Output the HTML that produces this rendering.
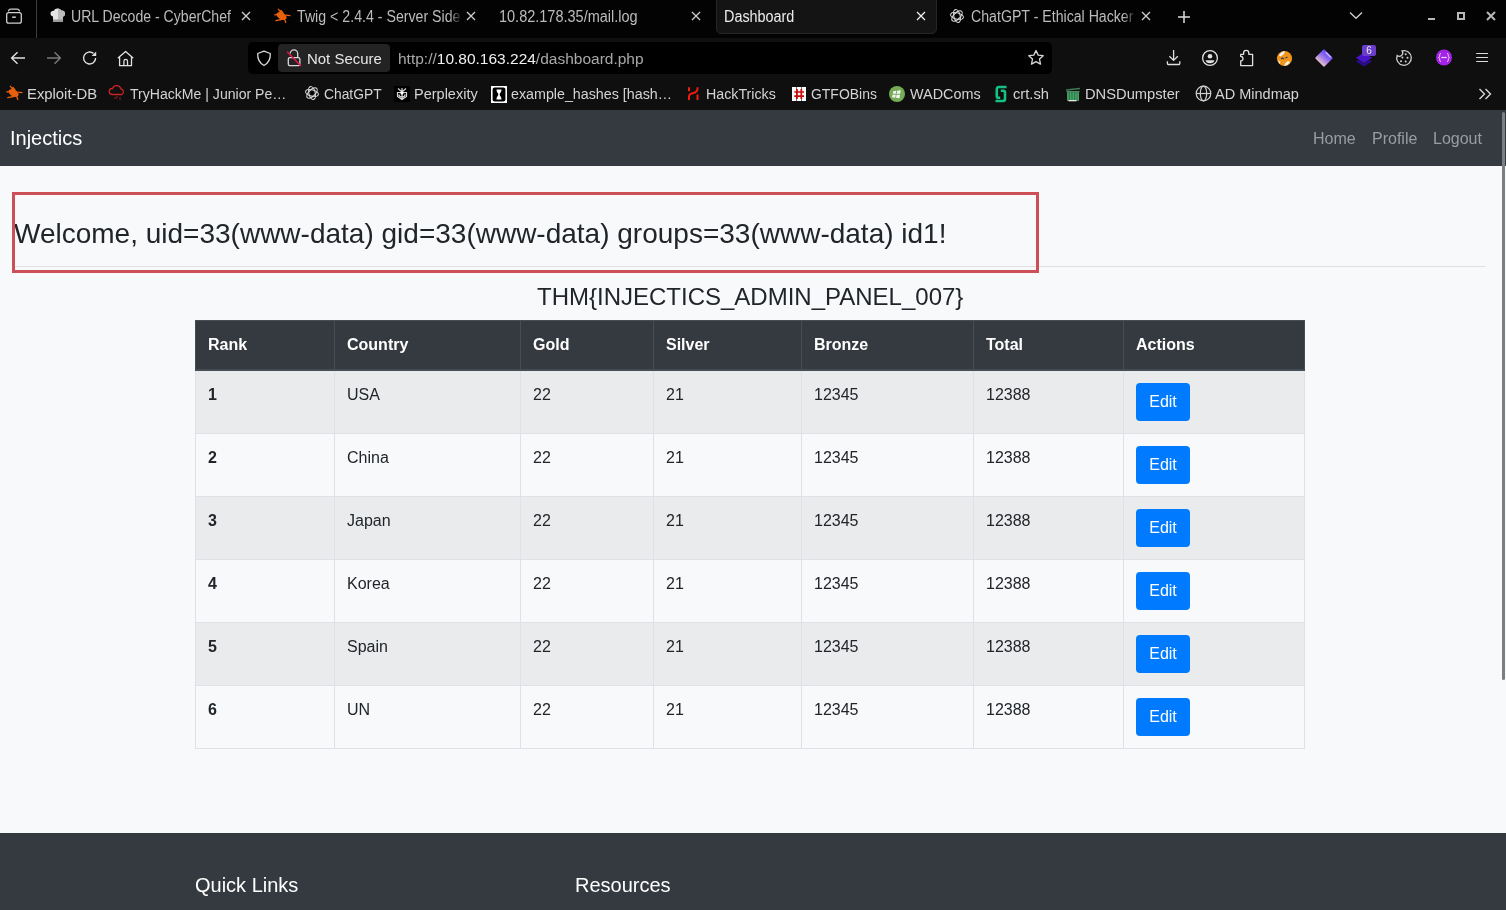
<!DOCTYPE html>
<html><head><meta charset="utf-8">
<style>
*{box-sizing:border-box;margin:0;padding:0}
html,body{width:1506px;height:910px;overflow:hidden;background:#f8f9fa;font-family:"Liberation Sans",sans-serif;position:relative}
body{will-change:transform}
.a{position:absolute}
#tabbar{position:absolute;left:0;top:0;width:1506px;height:38px;background:#030303}
#toolbar{position:absolute;left:0;top:38px;width:1506px;height:72px;background:#0f0f0f}
.ct{position:absolute;white-space:nowrap;font-size:15px;line-height:18px;color:#bdbdbd;transform-origin:0 14.2px}
.ic{position:absolute}
svg{display:block}
/* page */
#nav{position:absolute;left:0;top:110px;width:1506px;height:56px;background:#343a40}
.pt{position:absolute;white-space:nowrap}
table{position:absolute;left:195px;top:320px;width:1109px;border-collapse:collapse;font-size:16px;line-height:24px;color:#212529;table-layout:fixed}
th,td{border:1px solid #dee2e6;padding:12px;vertical-align:top;text-align:left}
thead th{background:#343a40;color:#fff;border-color:#454d55;border-bottom-width:2px}
tbody tr:nth-child(odd) td{background:#eaebed}
tbody tr:nth-child(even) td{background:#f8f9fa}
.btn{display:inline-block;width:54px;height:38px;background:#007bff;color:#fff;border-radius:4px;text-align:center;line-height:24px;padding:7px 0 5px;font-size:16px}
#footer{position:absolute;left:0;top:833px;width:1506px;height:77px;background:#343a40}
</style></head><body>

<div id="tabbar"></div>
<div id="toolbar"></div>
<!-- tab list icon -->
<svg class="ic" style="left:5px;top:7px" width="18" height="18" viewBox="0 0 18 18" fill="none" stroke="#d0d0d0" stroke-width="1.3"><path d="M3.6 3.8Q4 2.1 5.8 2.1H12.2Q14 2.1 14.4 3.8" stroke-linecap="round"/><rect x="1.7" y="5.6" width="14.6" height="10.6" rx="2"/><path d="M7.2 10.2h3.6" stroke-width="1.5"/></svg>
<div class="a" style="left:36px;top:0;width:1px;height:38px;background:#3d3d3d"></div>
<!-- chef hat -->
<svg class="ic" style="left:50px;top:8px" width="16" height="15" viewBox="0 0 16 15"><path d="M3 14V8.5C1 8 0.3 6.5 0.6 5 1 3.2 2.6 2.4 4 2.7 4.6 1 6.2 0.3 7.8 0.5 9.4 0.6 10.6 1.4 11.2 2.6 13 2.2 14.8 3.3 15 5.2 15.3 7 14.2 8.2 13 8.6V14Z" fill="#e6e6e6"/><path d="M8 0.5C9.5 0.6 10.6 1.4 11.2 2.6 13 2.2 14.8 3.3 15 5.2 15.3 7 14.2 8.2 13 8.6V14H8Z" fill="#bdbdbd"/><rect x="3" y="11.5" width="10" height="2.5" fill="#9a9a9a"/></svg>
<!-- bug orange (tab2) -->
<svg class="ic" style="left:273px;top:8px" width="18" height="16" viewBox="0 0 18 16"><g stroke="#e8600c" stroke-width="1.3" fill="none" stroke-linecap="round"><path d="M8 4.5L5.3 1.2M10 5L8 2.5M13 7.2L17 7.6M8.5 11.5L2.8 12.6M11.5 11L12.8 14.5M4.5 6.5L1.8 6.8"/></g><ellipse cx="8.6" cy="8" rx="5.4" ry="3.4" transform="rotate(28 8.6 8)" fill="#e8600c"/></svg>
<svg class="ic" style="left:449px;top:0;z-index:3" width="14" height="38"><defs><linearGradient id="fd" x1="0" x2="1"><stop offset="0" stop-color="#030303" stop-opacity="0"/><stop offset="1" stop-color="#030303"/></linearGradient></defs><rect width="14" height="38" fill="url(#fd)"/></svg>
<!-- active tab -->
<div class="a" style="left:716px;top:-6px;width:221px;height:40px;background:#141414;border:1px solid #262626;border-radius:5px"></div>
<!-- chatgpt icon -->
<svg class="ic" style="left:949px;top:8px" width="16" height="16" viewBox="0 0 16 16" fill="none" stroke="#d8d8d8" stroke-width="1.1"><g transform="translate(8 8)"><ellipse rx="6.6" ry="3.2" transform="rotate(15)"/><ellipse rx="6.6" ry="3.2" transform="rotate(75)"/><ellipse rx="6.6" ry="3.2" transform="rotate(135)"/><circle r="1.2" fill="#000" stroke="none"/></g></svg>
<svg class="ic" style="left:1123px;top:0;z-index:3" width="14" height="38"><rect width="14" height="38" fill="url(#fd)"/></svg>
<svg class="ic" style="left:1177px;top:10px" width="14" height="14" fill="none" stroke="#e0e0e0" stroke-width="1.5"><path d="M7 1v12M1 7h12"/></svg>
<svg class="ic" style="left:1349px;top:11px" width="14" height="9" fill="none" stroke="#d0d0d0" stroke-width="1.3"><path d="M1 1.5l6 5.8 6-5.8"/></svg>
<div class="a" style="left:1428px;top:18px;width:7px;height:2px;background:#b8b8b8"></div>
<div class="a" style="left:1457px;top:12px;width:8px;height:8px;border:2px solid #b8b8b8;border-top-width:2px"></div>
<svg class="ic" style="left:1486px;top:11px" width="10" height="10" fill="none" stroke="#b8b8b8" stroke-width="2"><path d="M1 1l8 8M9 1l-8 8"/></svg>

<svg class="ic" style="left:241px;top:11px" width="10" height="10" fill="none" stroke="#cfcfcf" stroke-width="1.3"><path d="M1 1L9 9M9 1L1 9"/></svg>
<svg class="ic" style="left:466px;top:11px" width="10" height="10" fill="none" stroke="#cfcfcf" stroke-width="1.3"><path d="M1 1L9 9M9 1L1 9"/></svg>
<svg class="ic" style="left:691.3px;top:11px" width="10" height="10" fill="none" stroke="#cfcfcf" stroke-width="1.3"><path d="M1 1L9 9M9 1L1 9"/></svg>
<svg class="ic" style="left:916px;top:11px" width="10" height="10" fill="none" stroke="#f0f0f0" stroke-width="1.3"><path d="M1 1L9 9M9 1L1 9"/></svg>
<svg class="ic" style="left:1141px;top:11px" width="10" height="10" fill="none" stroke="#cfcfcf" stroke-width="1.3"><path d="M1 1L9 9M9 1L1 9"/></svg>
<!-- toolbar -->
<svg class="ic" style="left:10px;top:50px" width="16" height="16" fill="none" stroke="#e0e0e0" stroke-width="1.4"><path d="M15 8H1.8M7.5 2.2L1.6 8l5.9 5.8"/></svg>
<svg class="ic" style="left:46px;top:50px" width="16" height="16" fill="none" stroke="#7a7a7a" stroke-width="1.4"><path d="M1 8h13.2M8.5 2.2L14.4 8l-5.9 5.8"/></svg>
<svg class="ic" style="left:82px;top:50px" width="16" height="16" fill="none" stroke="#e0e0e0" stroke-width="1.4"><path d="M13.6 8A6 6 0 1 1 11.5 3.4"/><path d="M14.2 1.6v4.5H9.7Z" fill="#e0e0e0" stroke="none"/></svg>
<svg class="ic" style="left:117px;top:50px" width="17" height="17" fill="none" stroke="#e0e0e0" stroke-width="1.3" stroke-linejoin="round" stroke-linecap="round"><path d="M1.3 7.8L8.6 1.4l7.2 6.4M2.6 6.8v8.9h11.9V6.8M6.9 15.7v-4.5a1.8 1.8 0 0 1 3.6 0v4.5"/></svg>
<div class="a" style="left:248px;top:42px;width:804px;height:32px;background:#000;border-radius:5px"></div>
<svg class="ic" style="left:256px;top:50px" width="16" height="17" fill="none" stroke="#d8d8d8" stroke-width="1.3"><path d="M8 1.2L14.3 3.5c.3 6-2.3 9.8-6.3 12-4-2.2-6.6-6-6.3-12Z" stroke-linejoin="round"/></svg>
<div class="a" style="left:278px;top:44px;width:112px;height:28px;background:#232323;border-radius:4px"></div>
<svg class="ic" style="left:286px;top:49px" width="17" height="18" fill="none" stroke="#d8d8d8" stroke-width="1.3"><rect x="2.3" y="8.6" width="11.6" height="8.1" rx="1.6"/><path d="M4.3 4.6a3.7 3.7 0 0 1 7.4 0V8.6"/><path d="M1.2 2.8l13.8 14.2" stroke="#e8174a" stroke-width="1.5"/></svg>
<div class="ct" style="left:397.5px;top:50.3px;transform:scale(1.033,1.03)"><span style="color:#a8a8a8">http://</span><span style="color:#f0f0f0">10.80.163.224</span><span style="color:#a8a8a8">/dashboard.php</span></div>
<svg class="ic" style="left:1027px;top:49px" width="18" height="18" fill="none" stroke="#d8d8d8" stroke-width="1.3"><path d="M9 1.5l2.2 4.6 5 .6-3.7 3.4 1 5-4.5-2.5-4.5 2.5 1-5L1.8 6.7l5-.6Z" stroke-linejoin="round"/></svg>
<svg class="ic" style="left:1166px;top:49px" width="16" height="17" fill="none" stroke="#e0e0e0" stroke-width="1.3" stroke-linejoin="round"><path d="M7.6 1v10.4M3.4 7.3l4.2 4.1 4.2-4.1M1.4 12.2v2.3q0 1 1 1h10.4q1 0 1-1v-2.3"/></svg>
<svg class="ic" style="left:1201px;top:49px" width="18" height="18" fill="none" stroke="#e0e0e0" stroke-width="1.3"><circle cx="9" cy="9" r="7.4"/><circle cx="9" cy="7.2" r="2.3" fill="#e0e0e0" stroke="none"/><path d="M4.6 11.2h8.8q-.5 3-4.4 3t-4.4-3Z" fill="#e0e0e0" stroke="none"/></svg>
<svg class="ic" style="left:1239px;top:49px" width="16" height="18" fill="none" stroke="#e0e0e0" stroke-width="1.3" stroke-linejoin="round"><path d="M1.7 5.3H4.6V4a2.6 2.6 0 0 1 5.2 0V5.3H13.6V16.6H1.7V12a2.3 2.3 0 0 0 0-4.6Z"/></svg>
<svg class="ic" style="left:1276px;top:50px" width="17" height="17"><circle cx="8.5" cy="8.5" r="7.6" fill="#f0951a"/><path d="M3 5.5A7.6 7.6 0 0 1 9 0.9L8 4 4.5 6.5Z M14 12A7.6 7.6 0 0 1 8 16L9.5 13 12 11Z M2 10L4.5 12 3.5 14Z" fill="#f2f2f2"/><path d="M5 9l1.5-1 1.5 1M9.5 8l2-1" stroke="#3a3a55" stroke-width="1.2" fill="none"/></svg>
<svg class="ic" style="left:1315px;top:49px" width="18" height="18"><defs><linearGradient id="dg" x1="0.9" y1="0.1" x2="0.2" y2="0.95"><stop offset="0" stop-color="#5a3cf0"/><stop offset="0.45" stop-color="#8e6cf0"/><stop offset="1" stop-color="#fad2c4"/></linearGradient></defs><path d="M9 1.5L16.5 9 9 16.5 1.5 9Z" fill="url(#dg)" stroke="url(#dg)" stroke-width="2.2" stroke-linejoin="round"/><path d="M11 3.5L15.5 8" stroke="#c9b4ff" stroke-width="1.5" stroke-linecap="round"/></svg>
<svg class="ic" style="left:1355px;top:51px" width="18" height="16"><path d="M1 10.5l8 5 8-5-2.5-1.6L9 12.3 3.5 8.9Z" fill="#2c0c8e"/><path d="M9 1.5l8 5.2-8 5.2-8-5.2Z" fill="#4a14c8"/></svg>
<div class="a" style="left:1362px;top:45px;width:14px;height:11px;background:#6a3dca;border-radius:2px;color:#eee;font-size:10px;line-height:11px;text-align:center">6</div>
<svg class="ic" style="left:1395px;top:49px" width="18" height="18"><path d="M7.11 1.95A7.3 7.3 0 1 1 2.14 6.5A3.4 3.4 0 0 0 7.11 1.95Z" fill="none" stroke="#d0d0d0" stroke-width="1.3"/><g fill="#d0d0d0"><circle cx="10.7" cy="5.2" r="1"/><circle cx="7.4" cy="8.5" r="1"/><circle cx="12.5" cy="8.7" r="1"/><circle cx="6" cy="12.2" r="1"/><circle cx="10.7" cy="12.5" r="1"/></g></svg>
<svg class="ic" style="left:1435px;top:49px" width="18" height="18"><circle cx="9" cy="8.5" r="8" fill="#a424e6"/><path d="M6 4.5c-1.3 0-1.3 1-1.3 2s-.4 2-1.1 2c.7 0 1.1.8 1.1 2s0 2 1.3 2M12 4.5c1.3 0 1.3 1 1.3 2s.4 2 1.1 2c-.7 0-1.1.8-1.1 2s0 2-1.3 2" stroke="#f0d8ff" stroke-width="1" fill="none"/><g fill="#fff"><circle cx="7.2" cy="8.5" r=".8"/><circle cx="9" cy="8.5" r=".8"/><circle cx="10.8" cy="8.5" r=".8"/></g></svg>
<svg class="ic" style="left:1475px;top:51px" width="14" height="13" fill="none" stroke="#dcdcdc" stroke-width="1.2"><path d="M1.2 2.5h11.8M1.2 6.5h11.8M1.2 10.5h11.8"/></svg>

<!-- bookmarks icons -->
<svg class="ic" style="left:5px;top:85px" width="18" height="16" viewBox="0 0 18 16"><g stroke="#e8600c" stroke-width="1.3" fill="none" stroke-linecap="round"><path d="M8 4.5L5.3 1.2M10 5L8 2.5M13 7.2L17 7.6M8.5 11.5L2.8 12.6M11.5 11L12.8 14.5M4.5 6.5L1.8 6.8"/></g><ellipse cx="8.6" cy="8" rx="5.4" ry="3.4" transform="rotate(28 8.6 8)" fill="#e8600c"/></svg>
<svg class="ic" style="left:108px;top:84px" width="18" height="18" fill="none" stroke="#cc2222" stroke-width="1.3"><path d="M4 10.5a3 3 0 0 1 .5-6 4.5 4.5 0 0 1 8.5.5 3 3 0 0 1 1 5.5Z"/><path d="M9 12v2M12 13v3M6 14h3" stroke="#8a2020" stroke-width="1"/></svg>
<svg class="ic" style="left:304px;top:85px" width="16" height="16" viewBox="0 0 16 16" fill="none" stroke="#d8d8d8" stroke-width="1.1"><g transform="translate(8 8)"><ellipse rx="6.6" ry="3.2" transform="rotate(15)"/><ellipse rx="6.6" ry="3.2" transform="rotate(75)"/><ellipse rx="6.6" ry="3.2" transform="rotate(135)"/><circle r="1.2" fill="#000" stroke="none"/></g></svg>
<svg class="ic" style="left:394px;top:86px" width="16" height="16"><rect width="16" height="16" fill="#000"/><g stroke="#d8d8d8" stroke-width="1.2" fill="none"><path d="M8 2v12M4 2.5l4 3.5 4-3.5M3 6.5h10M3.5 6.5v4l4.5 3 4.5-3v-4M5 8.5c0 2 1.5 2.5 3 2.5s3-.5 3-2.5"/></g><circle cx="8" cy="7" r="1.6" fill="#fff"/></svg>
<svg class="ic" style="left:491px;top:86px" width="16" height="17"><rect width="16" height="17" fill="#fff"/><rect x="1.6" y="1.6" width="12.8" height="13.8" rx="2" fill="#000"/><path d="M5.5 3.5h5c0 3-1.8 3.5-1.8 5s1.8 2 1.8 5h-5c0-3 1.8-3.5 1.8-5S5.5 6.5 5.5 3.5Z" fill="#fff"/></svg>
<svg class="ic" style="left:687px;top:86px" width="13" height="15" fill="none" stroke="#f01c0c" stroke-width="2"><path d="M2 1.3v4M10.5 8.5v5.5M2 14V10.5C2 8 4.5 7.5 6.5 7S10.5 5 10.5 2.5V1.3"/></svg>
<svg class="ic" style="left:792px;top:87px" width="14" height="14"><rect width="14" height="14" fill="#fafafa"/><path d="M4.5 0v14M9.5 0v14" stroke="#111" stroke-width=".6"/><g stroke="#c80c0c" stroke-width="1.7"><path d="M5 2v10M9.3 2v10M2.3 5h9.7M2.3 9.2h9.7"/></g></svg>
<svg class="ic" style="left:888px;top:85px" width="18" height="18"><circle cx="9" cy="9" r="8" fill="#74ad56"/><path d="M5.3 6.2l3-.4-.5 3H4.8ZM9.2 5.7l3.6-.5-.6 3.5H8.7ZM4.6 9.7h3.1l-.5 3-3.1-.4ZM8.5 9.7h3.6l-.6 3.5-3.5-.5Z" fill="#f4f4f4"/></svg>
<svg class="ic" style="left:994px;top:85px" width="14" height="18"><path d="M12.5 2H5Q2.8 2 2.8 4.2V11.2Q2.8 12.8 4.5 12.8H6.2M6.8 5.8H9.4Q11 5.8 11 7.4V14Q11 16 9 16H1.5" fill="none" stroke="#16c184" stroke-width="2.6" stroke-linejoin="round"/></svg>
<svg class="ic" style="left:1065px;top:86px" width="17" height="16"><path d="M1 4L15 2.5" stroke="#3f7a55" stroke-width="1.5"/><rect x="1.5" y="5" width="13" height="1.2" fill="#5a8a6a"/><rect x="2" y="6" width="12" height="9" fill="#2f7a4a"/><path d="M3 6.5v8M5.7 6.5v8M8.3 6.5v8M11 6.5v8M13.3 6.5v8" stroke="#4aa86a" stroke-width="1.3"/><rect x="3.5" y="14" width="8" height="1.3" fill="#e8e8e8"/></svg>
<svg class="ic" style="left:1195px;top:85px" width="17" height="17" fill="none" stroke="#d0d0d0" stroke-width="1.2"><circle cx="8.5" cy="8.5" r="7.3"/><ellipse cx="8.5" cy="8.5" rx="3.2" ry="7.3"/><path d="M1.2 8.5h14.6"/></svg>
<svg class="ic" style="left:1478px;top:88px" width="15" height="12" fill="none" stroke="#d8d8d8" stroke-width="1.4"><path d="M1.5 1l5 5-5 5M7.5 1l5 5-5 5"/></svg>
<div class="ct" style="left:71px;top:7.8px;color:#bcbcbc;font-size:16px;transform:scale(0.880,1)">URL Decode - CyberChef</div>
<div class="ct" style="left:296.5px;top:7.8px;color:#bcbcbc;font-size:16px;transform:scale(0.886,1)">Twig &lt; 2.4.4 - Server Side</div>
<div class="ct" style="left:499px;top:7.8px;color:#bcbcbc;font-size:16px;transform:scale(0.906,1)">10.82.178.35/mail.log</div>
<div class="ct" style="left:724.2px;top:7.8px;color:#ececec;font-size:16px;transform:scale(0.899,1)">Dashboard</div>
<div class="ct" style="left:971px;top:7.8px;color:#bcbcbc;font-size:16px;transform:scale(0.884,1)">ChatGPT - Ethical Hacker</div>
<div class="ct" style="left:306.5px;top:50.3px;color:#e6e6e6;transform:scale(0.997,1.03)">Not Secure</div>
<div class="ct" style="left:26.5px;top:84.8px;color:#d4d4d4;transform:scale(0.989,1.03)">Exploit-DB</div>
<div class="ct" style="left:129.5px;top:84.8px;color:#d4d4d4;transform:scale(0.938,1.03)">TryHackMe | Junior Pe…</div>
<div class="ct" style="left:324px;top:84.8px;color:#d4d4d4;transform:scale(0.921,1.03)">ChatGPT</div>
<div class="ct" style="left:414.3px;top:84.8px;color:#d4d4d4;transform:scale(0.967,1.03)">Perplexity</div>
<div class="ct" style="left:511px;top:84.8px;color:#d4d4d4;transform:scale(0.951,1.03)">example_hashes [hash…</div>
<div class="ct" style="left:705.9px;top:84.8px;color:#d4d4d4;transform:scale(0.948,1.03)">HackTricks</div>
<div class="ct" style="left:811.3px;top:84.8px;color:#d4d4d4;transform:scale(0.930,1.03)">GTFOBins</div>
<div class="ct" style="left:909.6px;top:84.8px;color:#d4d4d4;transform:scale(0.959,1.03)">WADComs</div>
<div class="ct" style="left:1012.6px;top:84.8px;color:#d4d4d4;transform:scale(0.979,1.03)">crt.sh</div>
<div class="ct" style="left:1084.8px;top:84.8px;color:#d4d4d4;transform:scale(0.980,1.03)">DNSDumpster</div>
<div class="ct" style="left:1215px;top:84.8px;color:#d4d4d4;transform:scale(0.968,1.03)">AD Mindmap</div>


<!-- page -->
<div id="nav">
  <div class="pt" style="left:10px;top:16px;font-size:20px;line-height:24px;color:#fff">Injectics</div>
  <div class="pt" style="left:1313px;top:20px;font-size:16px;line-height:18px;color:#9a9da0">Home</div>
  <div class="pt" style="left:1372px;top:20px;font-size:16px;line-height:18px;color:#9a9da0">Profile</div>
  <div class="pt" style="left:1433px;top:20px;font-size:16px;line-height:18px;color:#9a9da0">Logout</div>
</div>

<div class="pt" style="left:14px;top:217px;font-size:28px;line-height:34px;color:#212529">Welcome, uid=33(www-data) gid=33(www-data) groups=33(www-data) id1!</div>
<div class="a" style="left:14px;top:266px;width:1472px;height:1px;background:#dfe0e1"></div>
<div class="a" style="left:12px;top:192px;width:1027px;height:81px;border:3px solid #cd4f57"></div>

<div class="pt" style="left:537px;top:282px;font-size:24px;line-height:29px;color:#212529">THM{INJECTICS_ADMIN_PANEL_007}</div>

<table>
<colgroup><col style="width:139px"><col style="width:186px"><col style="width:133px"><col style="width:148px"><col style="width:172px"><col style="width:150px"><col style="width:181px"></colgroup>
<thead><tr><th>Rank</th><th>Country</th><th>Gold</th><th>Silver</th><th>Bronze</th><th>Total</th><th>Actions</th></tr></thead>
<tbody>
<tr><td><b>1</b></td><td>USA</td><td>22</td><td>21</td><td>12345</td><td>12388</td><td><span class="btn">Edit</span></td></tr>
<tr><td><b>2</b></td><td>China</td><td>22</td><td>21</td><td>12345</td><td>12388</td><td><span class="btn">Edit</span></td></tr>
<tr><td><b>3</b></td><td>Japan</td><td>22</td><td>21</td><td>12345</td><td>12388</td><td><span class="btn">Edit</span></td></tr>
<tr><td><b>4</b></td><td>Korea</td><td>22</td><td>21</td><td>12345</td><td>12388</td><td><span class="btn">Edit</span></td></tr>
<tr><td><b>5</b></td><td>Spain</td><td>22</td><td>21</td><td>12345</td><td>12388</td><td><span class="btn">Edit</span></td></tr>
<tr><td><b>6</b></td><td>UN</td><td>22</td><td>21</td><td>12345</td><td>12388</td><td><span class="btn">Edit</span></td></tr>
</tbody>
</table>

<div id="footer">
  <div class="pt" style="left:195px;top:40px;font-size:20px;line-height:24px;color:#fff">Quick Links</div>
  <div class="pt" style="left:575px;top:40px;font-size:20px;line-height:24px;color:#fff">Resources</div>
</div>

<div class="a" style="left:1502px;top:112px;width:3px;height:568px;background:#7b7f81;border-radius:2px"></div>

</body></html>
